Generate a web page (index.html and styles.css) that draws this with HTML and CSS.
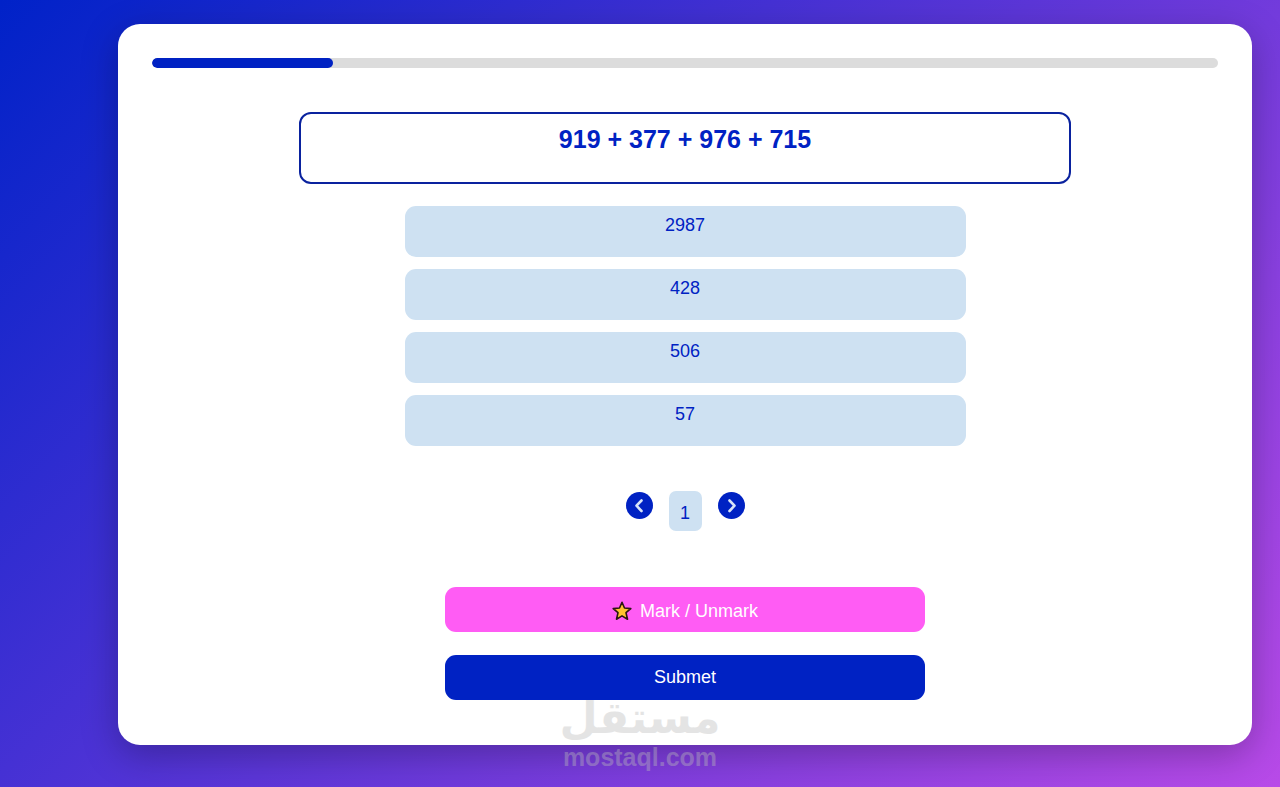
FILE: index.html
```html
<!DOCTYPE html>
<html lang="en">
<head>
<meta charset="utf-8">
<meta name="viewport" content="width=device-width, initial-scale=1">
<title>Quiz</title>
<link rel="stylesheet" href="styles.css">
</head>
<body>
<main class="card">
  <div class="progress" role="progressbar" aria-label="Quiz progress" aria-valuenow="17" aria-valuemin="0" aria-valuemax="100">
    <div class="progress-fill" style="width: 17%"></div>
  </div>
  <h1 class="question">919 + 377 + 976 + 715</h1>
  <div class="options">
    <button type="button" class="option">2987</button>
    <button type="button" class="option">428</button>
    <button type="button" class="option">506</button>
    <button type="button" class="option">57</button>
  </div>
  <nav class="pager" aria-label="Questions">
    <button type="button" class="arrow" aria-label="Previous question">
      <svg viewBox="0 0 27 27" aria-hidden="true"><path d="M15.500 8.500 L10.500 13.700 L15.500 19"/></svg>
    </button>
    <span class="page">1</span>
    <button type="button" class="arrow" aria-label="Next question">
      <svg viewBox="0 0 27 27" aria-hidden="true"><path d="M11.500 8.500 L16.500 13.700 L11.500 19"/></svg>
    </button>
  </nav>
  <div class="actions">
    <button type="button" class="action mark">
      <svg class="star" viewBox="0 0 20 20" aria-hidden="true"><path d="M10 1.300 L12.500 7 L18.800 7.600 L14 11.700 L15.500 18.200 L10 14.900 L4.500 18.200 L6 11.700 L1.200 7.600 L7.500 7 Z"/></svg>
      <span>Mark / Unmark</span>
    </button>
    <button type="button" class="action submit">Submet</button>
  </div>
</main>
<div class="watermark">
  <span class="watermark-ar" lang="ar" dir="rtl">مستقل</span>
  <span class="watermark-en">mostaql.com</span>
</div>
</body>
</html>
```
FILE: styles.css
```css
* {
  box-sizing: border-box;
}

body {
  position: relative;
  min-height: 100vh;
  margin: 0;
  padding: 24px 28px 42px 118px;
  background: linear-gradient(135deg, #0022c8, #b84ae8);
  font-family: "Liberation Sans", Arial, sans-serif;
  font-size: 18px;
  line-height: 20px;
  color: #0022c3;
}

button {
  border: 0;
  font: inherit;
  color: inherit;
  cursor: pointer;
}

.card {
  display: flex;
  flex-direction: column;
  align-items: center;
  padding: 34px 34px 45px;
  border-radius: 22px;
  background: #fff;
  box-shadow: 0 10px 36px rgba(0, 0, 0, 0.26);
}

.progress {
  width: 100%;
  height: 10px;
  border-radius: 5px;
  background: #dcdcdc;
  overflow: hidden;
}

.progress-fill {
  height: 100%;
  border-radius: 5px;
  background: #0022c3;
}

.question {
  width: 100%;
  max-width: 772px;
  min-height: 72px;
  margin: 44px 0 0;
  padding: 11px 20px;
  border: 2px solid #0a229e;
  border-radius: 12px;
  font-size: 25px;
  line-height: 28px;
  text-align: center;
}

.options {
  display: flex;
  flex-direction: column;
  gap: 12px;
  width: 100%;
  max-width: 561px;
  margin-top: 22px;
}

.option {
  padding: 9px 16px 22px;
  border-radius: 11px;
  background: #cee1f2;
}

.pager {
  display: flex;
  gap: 16px;
  margin-top: 45px;
}

.arrow {
  width: 27px;
  height: 27px;
  margin-top: 1px;
  padding: 0;
  border-radius: 50%;
  background: #0022c3;
}

.arrow svg {
  display: block;
  fill: none;
  stroke: #d8e4f8;
  stroke-width: 2.6;
  stroke-linecap: round;
  stroke-linejoin: round;
}

.page {
  min-width: 33px;
  padding: 12px 0 8px;
  border-radius: 7px;
  background: #cee1f2;
  text-align: center;
}

.actions {
  display: flex;
  flex-direction: column;
  gap: 23px;
  width: 100%;
  max-width: 480px;
  margin-top: 56px;
}

.action {
  display: flex;
  align-items: center;
  justify-content: center;
  gap: 8px;
  min-height: 45px;
  border-radius: 11px;
  color: #fff;
}

.mark {
  padding-top: 4px;
  background: #ff5cf4;
}

.submit {
  padding-bottom: 2px;
  background: #0022c3;
}

.star {
  width: 20px;
  height: 20px;
  fill: #ffc22e;
  stroke: #2b1712;
  stroke-width: 1.6;
  stroke-linejoin: round;
}

.watermark {
  position: absolute;
  right: 0;
  bottom: 16px;
  left: 0;
  display: flex;
  flex-direction: column;
  align-items: center;
  font-weight: bold;
  color: #bcbcbc;
  opacity: 0.39;
  pointer-events: none;
}

.watermark-ar {
  font-family: "DejaVu Sans", sans-serif;
  font-size: 44px;
  line-height: 50px;
}

.watermark-en {
  font-size: 25px;
  line-height: 28px;
}
```
